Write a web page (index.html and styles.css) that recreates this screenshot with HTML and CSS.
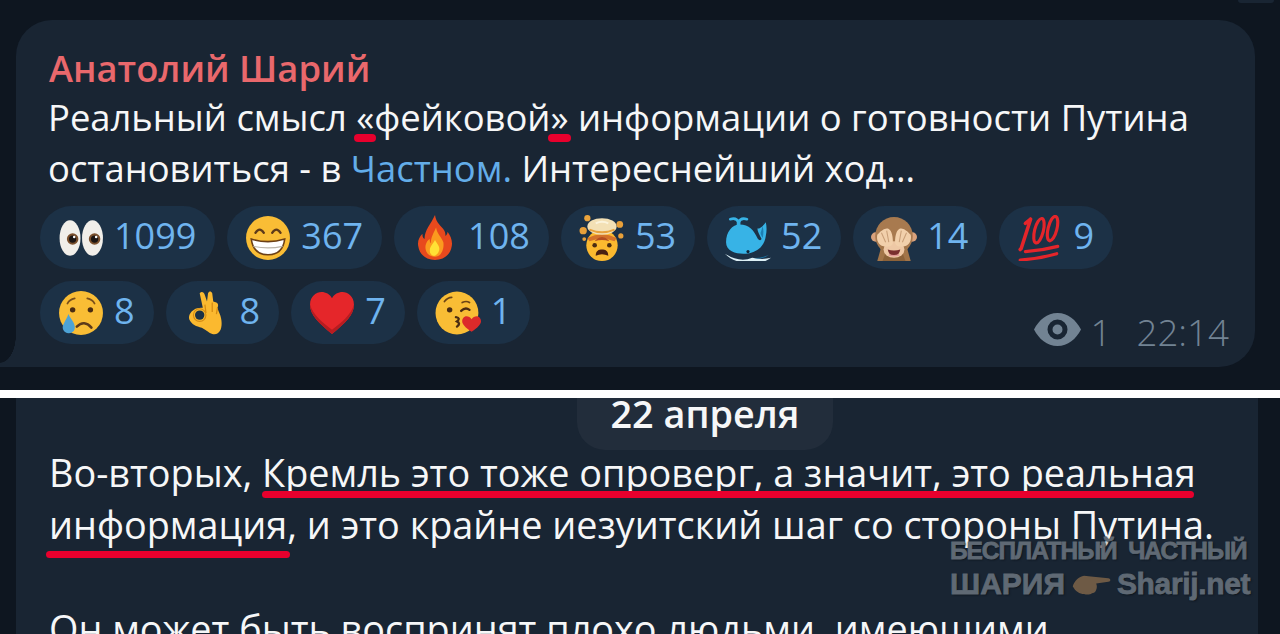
FILE: index.html
```html
<!DOCTYPE html>
<html lang="en">
<head>
    <meta charset="UTF-8">
    <meta name="viewport" content="width=device-width, initial-scale=1.0">
    <title>Анатолий Шарий</title>
    <link rel="stylesheet" href="styles.css">
</head>
<body>
    <div class="shot shot-top">
        <div class="bubble">
            <div class="name">Анатолий Шарий</div>
            <p class="text">Реальный смысл <span class="mark mark-short">«</span>фейковой<span class="mark mark-short">»</span> информации о готовности Путина<br>остановиться - в <a class="link" href="#">Частном.</a> Интереснейший ход...</p>

            <div class="reactions">
                <div class="pill">
                    <svg class="emoji" viewBox="0 0 44 44"><ellipse cx="11.500" cy="22" rx="10" ry="17" fill="#f1eee9"/><ellipse cx="33" cy="22" rx="10" ry="17" fill="#f1eee9"/><circle cx="14" cy="23" r="5.500" fill="#7a4f2c"/><circle cx="35" cy="23" r="5.500" fill="#7a4f2c"/><circle cx="14" cy="23" r="3.500" fill="#1b1412"/><circle cx="35" cy="23" r="3.500" fill="#1b1412"/><circle cx="15.500" cy="21" r="1.200" fill="#fff"/><circle cx="36.500" cy="21" r="1.200" fill="#fff"/></svg>
                    <span>1099</span>
                </div>
                <div class="pill">
                    <svg class="emoji" viewBox="0 0 44 44"><circle cx="22" cy="22" r="21" fill="#f9bd35"/><path d="M10 17q4-6 8 0M26 17q4-6 8 0" fill="none" stroke="#5d3a1a" stroke-width="2.200" stroke-linecap="round"/><path d="M6 23q16 5 32 0q-2 15-16 15T6 23z" fill="#fff" stroke="#6b3f16" stroke-width="1.500"/><path d="M8 30q14 3 28 0" fill="none" stroke="#b9b3a8" stroke-width="1.100"/></svg>
                    <span>367</span>
                </div>
                <div class="pill">
                    <svg class="emoji" viewBox="0 0 44 44"><path d="M22 0c1 8 6 10 9 15 1 2 1 4 1 5 1-1 2-2 2-4 3 4 5 9 4 14-1 8-8 13-16 13S7 38 6 30c-1-5 1-9 4-12 0 2 0 4 2 5 0-9 6-14 10-23z" fill="#e8491d"/><path d="M23 12c1 6 5 9 7 14 1 6-2 14-8 14s-10-5-9-11c1-3 2-5 4-6 0 2 0 3 1 4 0-6 3-10 5-15z" fill="#fb9a1f"/><path d="M22 24c2 4 5 6 4 10-1 3-3 5-5 5s-4-2-4-5c0-4 3-6 5-10z" fill="#ffe135"/></svg>
                    <span>108</span>
                </div>
                <div class="pill">
                    <svg class="emoji" viewBox="0 0 44 44"><circle cx="22" cy="29" r="15" fill="#fbb92f"/><path d="M8 22q14-7 28 0l-2 3q-12-4-24 0z" fill="#d4722a"/><path d="M16 24q6-6 12 0l1 1q-7-2-14 0z" fill="#b34e22"/><ellipse cx="22" cy="11" rx="14" ry="8" fill="#f3e0b5"/><path d="M10 14q12 5 24 0" stroke="#e8a23c" stroke-width="2" fill="none"/><path d="M16 8q6-3 12 0" stroke="#fbf3dc" stroke-width="2" fill="none"/><circle cx="4" cy="15" r="3.500" fill="#e8a03a"/><circle cx="39" cy="9" r="3.200" fill="#e8a03a"/><circle cx="8" cy="3" r="3" fill="#eba43c"/><circle cx="40" cy="20" r="2.500" fill="#e8a03a"/><circle cx="5" cy="23" r="1.800" fill="#e8a03a"/><circle cx="15" cy="29" r="2.200" fill="#4a2c12"/><circle cx="29" cy="29" r="2.200" fill="#4a2c12"/><path d="M16 39c0-5 3-6 6-6s6 1 6 6c-4-2-8-2-12 0z" fill="#4a2012"/></svg>
                    <span>53</span>
                </div>
                <div class="pill">
                    <svg class="emoji" viewBox="0 0 44 44"><path d="M1 26c0-10 6-17 13-17 9 0 14 6 17 13 1 2 3 3 4 1-2-4-4-7-4-10 3 0 6-3 8-6 1 4 1 9 0 13-1 8-6 14-14 16-6 2-24 2-24-10z" fill="#37b3e6"/><path d="M36 11c1 3 1 7 0 11-1-2-2-3-2-5 1-2 1-4 2-6z" fill="#1c7fb4"/><path d="M0 37q14 9 26 4 10 2 18 0-8 6-18 4Q9 47 0 37z" fill="#dceff5"/><path d="M26 41q8 1 16-3-6 5-16 3z" fill="#1c7fb4"/><path d="M13 11V6" stroke="#37b3e6" stroke-width="3.500"/><path d="M13 7q-2-5-8-3M13 7q2-5 8-3" stroke="#37b3e6" stroke-width="2.600" fill="none" stroke-linecap="round"/><circle cx="22" cy="35" r="1.500" fill="#123"/></svg>
                    <span>52</span>
                </div>
                <div class="pill">
                    <svg class="emoji" viewBox="0 0 44 44"><circle cx="4.500" cy="21" r="4.500" fill="#d9a27c"/><circle cx="39.500" cy="21" r="4.500" fill="#d9a27c"/><ellipse cx="22" cy="20" rx="18" ry="18" fill="#a87a4f"/><path d="M6 44l4-14h24l4 14z" fill="#a27549"/><path d="M11 44l3-8h16l3 8z" fill="#8c6239"/><ellipse cx="22" cy="33" rx="10" ry="8" fill="#eec8a5"/><path d="M21 27c-1 3-5 4-9 3-5-1-7-6-6-11 3-4 8-7 10-6 3 1 5 5 5 14zM23 27c1 3 5 4 9 3 5-1 7-6 6-11-3-4-8-7-10-6-3 1-5 5-5 14z" fill="#f2d0ab"/><path d="M10 17l4 9M15 15l2 11M34 17l-4 9M29 15l-2 11" stroke="#c99f78" stroke-width="1"/><path d="M16 33q6 2 12 0-1 6-6 6t-6-6z" fill="#7a2f2f"/><path d="M17 38q5 2 10 0" stroke="#e29a97" stroke-width="1.500" fill="none"/></svg>
                    <span>14</span>
                </div>
                <div class="pill">
                    <svg class="emoji" viewBox="0 0 44 44"><g fill="none" stroke="#e5252a" stroke-linecap="round"><path d="M13 4L4 32l-1 1M13 4L8 8" stroke-width="3.400"/><ellipse cx="21" cy="15" rx="4.200" ry="12" transform="rotate(14 21 15)" stroke-width="3"/><ellipse cx="34" cy="13" rx="4.200" ry="12" transform="rotate(14 34 13)" stroke-width="3"/><path d="M8 35q16-1 31-5" stroke-width="3"/><path d="M3 43q18-1 35-6" stroke-width="3"/></g></svg>
                    <span>9</span>
                </div>
            </div>

            <div class="last-row">
                <div class="reactions">
                    <div class="pill">
                        <svg class="emoji" viewBox="0 0 44 44"><circle cx="22" cy="22" r="21" fill="#f9bd35"/><circle cx="14" cy="19" r="2.600" fill="#4a2c12"/><circle cx="31" cy="19" r="2.600" fill="#4a2c12"/><path d="M9 13q2-4 7-5M35 13q-2-4-7-5" stroke="#7a4f1a" stroke-width="1.600" fill="none" stroke-linecap="round"/><path d="M18 35q7-7 14 1" stroke="#5d3a1a" stroke-width="2.400" fill="none" stroke-linecap="round"/><path d="M10 23c2 5 7 9 6 14-1 5-9 6-11 1-2-4 3-9 5-15z" fill="#4da3d6"/></svg>
                        <span>8</span>
                    </div>
                    <div class="pill">
                        <svg class="emoji" viewBox="0 0 44 44"><path d="M15 3c2-2 4-1 5 2l2 6 1-8c1-2 3-2 4 0l1 8 3 1c2 1 2 3 1 5l1 3c3 6 4 13 2 18-2 4-5 5-8 4-3-1-6-4-10-6-5-1-10-3-12-8-1-4 2-8 6-10 2-1 5-1 7-1z" fill="#fbb92f"/><path d="M20 14l1 8M27 12l0 9M32 17l-1 6" stroke="#d48a12" stroke-width="1.200"/><circle cx="15" cy="24" r="4.500" fill="#1c3146"/><circle cx="15" cy="24" r="6" fill="none" stroke="#d48a12" stroke-width="1"/></svg>
                        <span>8</span>
                    </div>
                    <div class="pill">
                        <svg class="emoji" viewBox="0 0 44 44"><path d="M22 42C9 31 1 24 1 14 1 6 7 2 12 2c4 0 8 2 10 6 2-4 6-6 10-6 5 0 11 4 11 12 0 10-8 17-21 28z" fill="#e5262a"/><path d="M22 42C9 31 1 24 1 14c3 10 12 17 21 24 9-7 18-14 21-24 0 10-8 17-21 28z" fill="#b81c20"/></svg>
                        <span>7</span>
                    </div>
                    <div class="pill">
                        <svg class="emoji" viewBox="0 0 44 44"><circle cx="21" cy="22" r="20.500" fill="#f9bd35"/><circle cx="14" cy="19" r="2.600" fill="#4a2c12"/><path d="M25 20q4-4 8-1" stroke="#4a2c12" stroke-width="2.200" fill="none" stroke-linecap="round"/><path d="M9 11q3-4 7-4M26 12q4-2 7 0" stroke="#6b4416" stroke-width="1.600" fill="none" stroke-linecap="round"/><path d="M20 26q5 1 1 4 4 2 0 5" stroke="#4a2c12" stroke-width="2.200" fill="none" stroke-linecap="round"/><path d="M35 40c-6-4-9-7-9-10 0-3 2-5 4-5 2 0 4 1 5 3 1-2 3-3 5-3 2 0 4 2 4 5 0 3-3 6-9 10z" fill="#dc2a2a"/></svg>
                        <span>1</span>
                    </div>
                </div>
                <div class="meta">
                    <svg class="eye" viewBox="0 0 47 33"><path fill-rule="evenodd" d="M23.500 0C34 0 42 7 47 16.500 42 26 34 33 23.500 33S5 26 0 16.500C5 7 13 0 23.500 0zm0 6.500a10 10 0 1 0 0 20 10 10 0 0 0 0-20zm0 5a5 5 0 1 1 0 10 5 5 0 0 1 0-10z" fill="#728393"/></svg>
                    <span class="views">1</span>
                    <span>22:14</span>
                </div>
            </div>
            <div class="tail"></div>
        </div>
    </div>

    <div class="divider"></div>

    <div class="shot shot-bottom">
        <div class="bubble bubble-cut">
            <div class="date">22 апреля</div>
            <p class="text">Во-вторых, <span class="mark">Кремль это тоже опроверг, а значит, это реальная</span><br><span class="mark mark-low">информация</span>, и это крайне иезуитский шаг со стороны Путина.</p>
            <p class="text text-next">Он может быть воспринят плохо людьми, имеющими</p>
            <div class="watermark">
                <div class="wm-top">БЕСПЛАТНЫЙ&nbsp; ЧАСТНЫЙ</div>
                <div class="wm-row">
                    <span>ШАРИЯ</span>
                    <svg class="wm-hand" viewBox="0 0 46 27"><path d="M2 16c2-6 7-11 13-12l8 1 20 2c3 .5 3 4 0 4l-14 2c1 3 1 5 0 7-1 3-3 4-5 4-2 2-6 2-9 1-5 0-10-3-13-9z" fill="#6e5a45"/></svg>
                    <span class="wm-site">Sharij.net</span>
                </div>
            </div>
        </div>
    </div>
</body>
</html>
```

FILE: styles.css
```css
html, body {
    margin: 0;
    padding: 0;
}

body {
    background-color: #0e1620;
    font-family: "Open Sans", sans-serif;
    color: #f6f7f8;
    height: 634px;
    overflow: hidden;
}

.shot {
    overflow: hidden;
}

.shot-top {
    position: relative;
    height: 390px;
    padding: 20px 25px 0 16px;
    box-sizing: border-box;
}

/* bottom edge of the message above */
.shot-top::before {
    content: "";
    position: absolute;
    top: 0;
    right: 6px;
    width: 36px;
    height: 3px;
    border-radius: 0 0 12px 12px;
    background-color: #192533;
}

.shot-bottom {
    height: 236px;
    padding: 0 22px 0 16px;
    box-sizing: border-box;
}

.divider {
    height: 8px;
    background-color: #fff;
}

.bubble {
    position: relative;
    background-color: #192533;
    border-radius: 36px 36px 36px 0;
    height: 347px;
    box-sizing: border-box;
    padding: 27px 26px 0 24px;
}

.bubble-cut {
    height: 236px;
    border-radius: 0;
    padding-top: 0;
}

.tail {
    position: absolute;
    left: -16px;
    bottom: 0;
    width: 16px;
    height: 32px;
    background: radial-gradient(ellipse 16px 28px at 0 0, transparent 98%, #192533 100%);
}

.name {
    font-size: 36.3px;
    font-weight: 600;
    line-height: 42px;
    color: #e9686c;
    margin: 0 0 3px 9px;
}

.text {
    font-size: 36.4px;
    line-height: 51px;
    margin: 0 0 0 8px;
    white-space: nowrap;
}

.bubble-cut .text {
    font-size: 37.8px;
    line-height: 52px;
    margin-left: 9px;
}

.bubble-cut .text-next {
    margin-top: 52px;
}

.link {
    color: #63ade9;
    text-decoration: none;
}

.mark {
    position: relative;
}

.mark::after {
    content: "";
    position: absolute;
    left: 0;
    right: 2px;
    bottom: 0;
    height: 7px;
    border-radius: 4px;
    background-color: #e8002d;
}

.mark-short::after {
    left: -2px;
    right: -2px;
    height: 8px;
}

.mark-low::after {
    left: -3px;
    right: -3px;
    bottom: -8px;
}

.reactions {
    display: flex;
    gap: 12px;
    margin-top: 12px;
}

.pill {
    display: flex;
    align-items: center;
    gap: 10px;
    height: 63px;
    padding: 0 19px 0 18px;
    border-radius: 32px;
    background-color: #1c3146;
    color: #6fb4ef;
    font-size: 36px;
    font-weight: 500;
    line-height: 59px;
}

.pill span {
    padding-bottom: 4px;
}

.emoji {
    width: 46px;
    height: 46px;
}

.last-row {
    display: flex;
    justify-content: space-between;
    align-items: flex-end;
}

.meta {
    display: flex;
    align-items: center;
    color: #728393;
    font-size: 36.7px;
    font-weight: 300;
    line-height: 34px;
    margin-bottom: -6px;
}

.eye {
    width: 47px;
    height: 33px;
    margin-right: 10px;
    margin-bottom: 4px;
}

.views {
    margin-right: 25px;
}

.date {
    width: 256px;
    height: 52px;
    margin-left: 537px;
    margin-bottom: -3px;
    border-radius: 0 0 28px 28px;
    background-color: #222d3b;
    font-size: 37.8px;
    font-weight: 600;
    line-height: 31px;
    text-align: center;
}

.watermark {
    position: absolute;
    left: 934px;
    top: 136px;
    font-family: "Liberation Sans", sans-serif;
    font-weight: 700;
    line-height: 33px;
    white-space: nowrap;
    color: #5f6974;
    text-shadow: 1px 1px 2px #0b1118;
    -webkit-text-stroke: 0.8px #5f6974;
}

.wm-top {
    font-size: 24.5px;
    letter-spacing: -1.05px;
}

.wm-row {
    display: flex;
    align-items: center;
    gap: 6px;
    font-size: 30px;
}

.wm-site {
    letter-spacing: -0.35px;
}

.wm-hand {
    width: 40px;
    height: 26px;
}
```
